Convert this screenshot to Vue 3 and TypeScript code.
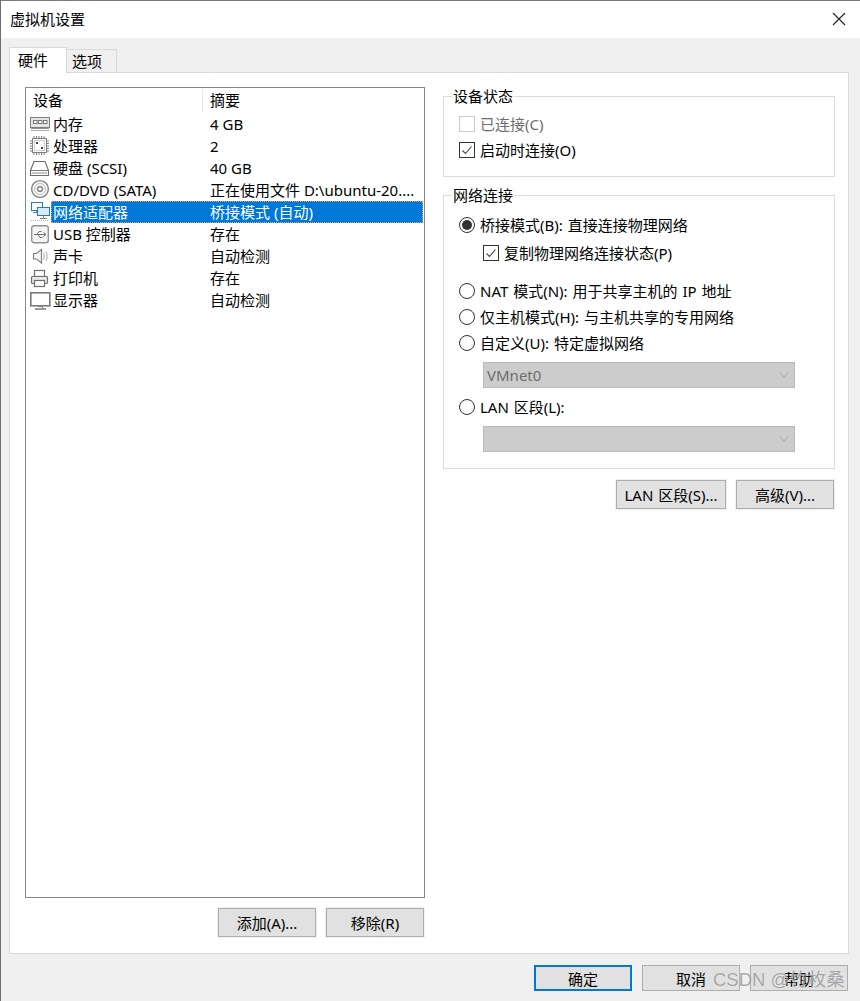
<script setup lang="ts">
interface Device { id: string; name: string; summary: string; selected?: boolean }
const devices: Device[] = [
  { id: 'mem', name: '内存', summary: '4 GB' },
  { id: 'cpu', name: '处理器', summary: '2' },
  { id: 'hdd', name: '硬盘 (SCSI)', summary: '40 GB' },
  { id: 'cd', name: 'CD/DVD (SATA)', summary: '正在使用文件 D:\\ubuntu-20....' },
  { id: 'net', name: '网络适配器', summary: '桥接模式 (自动)', selected: true },
  { id: 'usb', name: 'USB 控制器', summary: '存在' },
  { id: 'snd', name: '声卡', summary: '自动检测' },
  { id: 'prn', name: '打印机', summary: '存在' },
  { id: 'mon', name: '显示器', summary: '自动检测' },
]
</script>

<template>
  <div class="window">
    <header class="titlebar">
      <span class="title">虚拟机设置</span>
      <svg class="close" width="14" height="14" viewBox="0 0 14 14">
        <path d="M1 1L13 13M13 1L1 13" stroke="#222" stroke-width="1.1" fill="none" />
      </svg>
    </header>

    <div class="tabs">
      <div class="tab active">硬件</div>
      <div class="tab">选项</div>
    </div>

    <main class="panel">
      <section class="left">
        <div class="list">
          <div class="list-head">
            <span class="h1">设备</span>
            <span class="h2">摘要</span>
          </div>
          <div v-for="d in devices" :key="d.id" class="row">
            <svg class="ico" width="23" height="22" viewBox="0 0 23 22" fill="none">
              <g v-if="d.id === 'mem'">
                <rect x="2.5" y="4.5" width="19" height="10" fill="#e6e6e6" stroke="#7d7d7d" />
                <path d="M3 15.5H21" stroke="#8f8f8f" />
                <path d="M3 17.5H21" stroke="#b0b0b0" />
                <rect x="5.5" y="7.5" width="3.5" height="3" stroke="#777" fill="#fff" />
                <rect x="10.5" y="7.5" width="3.5" height="3" stroke="#777" fill="#fff" />
                <rect x="15.5" y="7.5" width="3.5" height="3" stroke="#777" fill="#fff" />
              </g>
              <g v-else-if="d.id === 'cpu'">
                <rect x="4.5" y="3.5" width="14" height="14" fill="#fff" stroke="#808080" />
                <rect x="6.5" y="5.5" width="10" height="10" stroke="#d0d0d0" />
                <path d="M6 1v2M8.5 1v2M11 1v2M13.5 1v2M16 1v2M6 18v2M8.5 18v2M11 18v2M13.5 18v2M16 18v2M2 6h2M2 8.5h2M2 11h2M2 13.5h2M2 16h2M19 6h2M19 8.5h2M19 11h2M19 13.5h2M19 16h2" stroke="#7f7f7f" />
                <rect x="8" y="7" width="2" height="2" fill="#444" />
                <rect x="13" y="12" width="2" height="2" fill="#444" />
              </g>
              <g v-else-if="d.id === 'hdd'">
                <path d="M2.5 13.5L6 4.5H17L20.5 13.5V18.5H2.5Z" fill="#fff" stroke="#6f6f6f" stroke-width="1.2" />
                <path d="M3 13.5H20" stroke="#777" />
                <path d="M4 16H19" stroke="#c4c4c4" stroke-width="2" />
              </g>
              <g v-else-if="d.id === 'cd'">
                <circle cx="12" cy="10" r="8.4" fill="#f4f4f4" stroke="#808080" stroke-width="1.4" />
                <circle cx="12" cy="10" r="5.5" stroke="#c2c2c2" />
                <circle cx="12" cy="10" r="2.4" fill="#fff" stroke="#707070" stroke-width="1.2" />
              </g>
              <g v-else-if="d.id === 'net'">
                <rect x="3.5" y="1.5" width="11" height="8" fill="#fff" stroke="#1f7fc4" />
                <path d="M5 11.5H12M8.5 10V11" stroke="#8a8a8a" />
                <rect x="9.5" y="6.5" width="12" height="8" fill="#d6eafa" stroke="#1f7fc4" />
                <path d="M15.5 15V17M12 17.5H19" stroke="#808080" />
                <path d="M3 19.5H21" stroke="#b5b5b5" stroke-dasharray="1 1" />
              </g>
              <g v-else-if="d.id === 'usb'">
                <rect x="3.7" y="2.7" width="16.6" height="17" rx="2.5" fill="#f6f6f6" stroke="#929292" stroke-width="1.4" />
                <path d="M6 11.5H17.5M15.5 9.5L18 11.5L15.5 13.5M9 11.5L11 8.5H13.5M10 11.5L12 14.5H14.5" stroke="#6f6f6f" />
              </g>
              <g v-else-if="d.id === 'snd'">
                <path d="M5.5 8.5H8.5L13.5 4.5V18L8.5 14H5.5Z" fill="#f6f6f6" stroke="#808080" stroke-width="1.2" />
                <path d="M15.5 8C16.5 9.5 16.5 13 15.5 14.5M18 6.5C19.5 9 19.5 13.5 18 16" stroke="#a8a8a8" />
              </g>
              <g v-else-if="d.id === 'prn'">
                <rect x="6.5" y="3.5" width="10" height="6" fill="#fff" stroke="#6f6f6f" stroke-width="1.2" />
                <rect x="3.5" y="9.5" width="16" height="7" rx="1" fill="#e8e8e8" stroke="#6f6f6f" stroke-width="1.2" />
                <rect x="6.5" y="13.5" width="10" height="6" fill="#fff" stroke="#6f6f6f" stroke-width="1.2" />
              </g>
              <g v-else>
                <rect x="2.8" y="3.8" width="19" height="13" fill="#fff" stroke="#7a7a7a" stroke-width="1.6" />
                <path d="M10 17.5H14.5V19" stroke="#808080" />
                <path d="M7 20H18" stroke="#808080" stroke-width="1.6" />
              </g>
            </svg>
            <div class="cells" :class="{ selected: d.selected }">
              <span class="name">{{ d.name }}</span>
              <span class="summary">{{ d.summary }}</span>
            </div>
          </div>
        </div>
        <div class="btn-row left-btns">
          <button class="btn">添加(A)...</button>
          <button class="btn">移除(R)</button>
        </div>
      </section>

      <section class="right">
        <fieldset class="group">
          <legend>设备状态</legend>
          <label class="opt disabled"><span class="check"></span>已连接(C)</label>
          <label class="opt">
            <span class="check on">
              <svg width="14" height="14" viewBox="0 0 14 14"><path d="M2.5 7.5L5.5 10.5L11.5 3.5" stroke="#444" stroke-width="1.1" fill="none" /></svg>
            </span>启动时连接(O)
          </label>
        </fieldset>

        <fieldset class="group net">
          <legend>网络连接</legend>
          <label class="opt"><span class="radio on"></span>桥接模式(B): 直接连接物理网络</label>
          <label class="opt sub">
            <span class="check on">
              <svg width="14" height="14" viewBox="0 0 14 14"><path d="M2.5 7.5L5.5 10.5L11.5 3.5" stroke="#444" stroke-width="1.1" fill="none" /></svg>
            </span>复制物理网络连接状态(P)
          </label>
          <label class="opt nat"><span class="radio"></span>NAT 模式(N): 用于共享主机的 IP 地址</label>
          <label class="opt"><span class="radio"></span>仅主机模式(H): 与主机共享的专用网络</label>
          <label class="opt"><span class="radio"></span>自定义(U): 特定虚拟网络</label>
          <div class="select">
            <span>VMnet0</span>
            <svg width="10" height="6" viewBox="0 0 10 6"><path d="M0.5 0.5L5 5L9.5 0.5" stroke="#a8a8a8" fill="none" /></svg>
          </div>
          <label class="opt lan"><span class="radio"></span>LAN 区段(L):</label>
          <div class="select">
            <span></span>
            <svg width="10" height="6" viewBox="0 0 10 6"><path d="M0.5 0.5L5 5L9.5 0.5" stroke="#a8a8a8" fill="none" /></svg>
          </div>
        </fieldset>

        <div class="btn-row right-btns">
          <button class="btn lan-btn">LAN 区段(S)...</button>
          <button class="btn">高级(V)...</button>
        </div>
      </section>
    </main>

    <footer class="footer">
      <button class="fbtn primary">确定</button>
      <button class="fbtn">取消</button>
      <button class="fbtn">帮助</button>
    </footer>

    <div class="watermark">CSDN @竹枚桑</div>
  </div>
</template>

<style>
html, body { margin: 0; padding: 0; background: #f0f0f0; }
</style>

<style scoped>
.window {
  position: relative;
  box-sizing: border-box;
  width: 860px;
  height: 1001px;
  display: flex;
  flex-direction: column;
  overflow: hidden;
  background: #f0f0f0;
  border-left: 1px solid #6e6e6e;
  border-top: 1px solid #7a7a7a;
  color: #000;
  font-family: "Noto Sans", "Noto Sans CJK SC", sans-serif;
  font-size: 15px;
}
.titlebar {
  box-sizing: border-box;
  height: 37px;
  flex: none;
  display: flex;
  align-items: center;
  justify-content: space-between;
  background: #fff;
  padding: 0 14px 2px 9px;
}
.title { font-size: 15px; line-height: 20px; }
.close { display: block; margin-top: 1px; }

.tabs {
  height: 35px;
  flex: none;
  display: flex;
  align-items: flex-end;
  padding-left: 8px;
  margin-bottom: -1px;
  position: relative;
  z-index: 1;
}
.tab {
  box-sizing: border-box;
  width: 50px;
  height: 24px;
  border: 1px solid #d9d9d9;
  border-left: 0;
  background: #f0f0f0;
  padding-left: 5px;
  line-height: 23px;
}
.tab.active {
  width: 58px;
  height: 26px;
  background: #fff;
  border-left: 1px solid #d9d9d9;
  border-bottom: 0;
  padding-left: 8px;
  line-height: 24px;
}

.panel {
  flex: 1;
  min-height: 0;
  margin: 0 11px 0 8px;
  box-sizing: border-box;
  background: #fff;
  border: 1px solid #d9d9d9;
  padding: 14px 13px 16px 15px;
  display: flex;
  gap: 18px;
}

.left { width: 400px; display: flex; flex-direction: column; flex: none; }
.list {
  flex: 1;
  box-sizing: border-box;
  border: 1px solid #828790;
  background: #fff;
}
.list-head {
  height: 25px;
  display: flex;
  align-items: center;
}
.h1 { width: 177px; box-sizing: border-box; padding-left: 7px; height: 23px; line-height: 23px; border-right: 1px solid #e5e5e5; }
.h2 { padding-left: 7px; line-height: 23px; }
.row { height: 22px; display: flex; }
.ico { flex: none; margin-left: 2px; display: block; }
.cells {
  flex: 1;
  display: flex;
  line-height: 22px;
  margin-right: 1px;
  min-width: 0;
}
.cells.selected {
  background: #0078d7;
  color: #fff;
  outline: 1px dotted #e8a33d;
  outline-offset: -1px;
}
.name { width: 159px; flex: none; padding-left: 2px; box-sizing: border-box; white-space: nowrap; }
.summary { white-space: nowrap; }

.btn-row { display: flex; justify-content: flex-end; gap: 10px; flex: none; }
.left-btns { margin-top: 10px; padding-right: 1px; }
.btn {
  box-sizing: border-box;
  width: 98px;
  height: 29px;
  padding: 0;
  background: #e1e1e1;
  border: 1px solid #adadad;
  box-shadow: 0 0 0 1px #f0f0f0;
  font: inherit;
  word-spacing: 1px;
  color: #000;
}
.lan-btn { width: 110px; }

.right { flex: 1; display: flex; flex-direction: column; min-width: 0; margin-top: -1px; }
.group {
  margin: 0;
  padding: 5px 0 13px 15px;
  border: 1px solid #dcdcdc;
  min-width: 0;
}
.group + .group { margin-top: 8px; }
.group legend {
  margin-left: -7px;
  padding: 0 1px;
  line-height: 20px;
}
.net { padding-top: 7px; padding-bottom: 16px; }
.opt {
  height: 26px;
  display: flex;
  align-items: center;
  gap: 5px;
  line-height: 26px;
  white-space: nowrap;
  word-spacing: 1px;
}
.opt.disabled { color: #6d6d6d; }
.opt.sub { margin: 2px 0 12px 24px; }
.opt.lan { margin-top: 6px; }
.check {
  box-sizing: border-box;
  width: 16px;
  height: 16px;
  flex: none;
  border: 1px solid #cccccc;
  background: #fff;
  display: flex;
  align-items: center;
  justify-content: center;
}
.check.on { border-color: #333; }
.radio {
  box-sizing: border-box;
  width: 16px;
  height: 16px;
  flex: none;
  border: 1px solid #333;
  border-radius: 50%;
  background: #fff;
  position: relative;
}
.radio.on::after {
  content: "";
  position: absolute;
  inset: 2px;
  border-radius: 50%;
  background: #333;
}
.select {
  box-sizing: border-box;
  width: 312px;
  height: 26px;
  margin: 6px 0 0 24px;
  background: #cccccc;
  border: 1px solid #bababa;
  display: flex;
  align-items: center;
  justify-content: space-between;
  padding: 0 5px 0 3px;
  color: #6d6d6d;
  line-height: 24px;
}
.right-btns { margin-top: 11px; padding-right: 1px; }

.footer {
  height: 47px;
  flex: none;
  box-sizing: border-box;
  padding: 11px 12px 0 0;
  display: flex;
  justify-content: flex-end;
  gap: 10px;
}
.fbtn {
  box-sizing: border-box;
  width: 98px;
  height: 26px;
  padding: 0;
  background: #e1e1e1;
  border: 1px solid #adadad;
  font: inherit;
  color: #000;
}
.fbtn.primary { border: 2px solid #0078d7; }

.watermark {
  position: absolute;
  left: 712px;
  top: 965px;
  font-family: "Liberation Sans", "Noto Sans CJK SC", sans-serif;
  font-size: 18.5px;
  line-height: 28px;
  white-space: nowrap;
  color: rgba(110, 110, 110, 0.6);
  text-shadow: 0 0 1px rgba(255, 255, 255, 0.8);
  pointer-events: none;
}
</style>
